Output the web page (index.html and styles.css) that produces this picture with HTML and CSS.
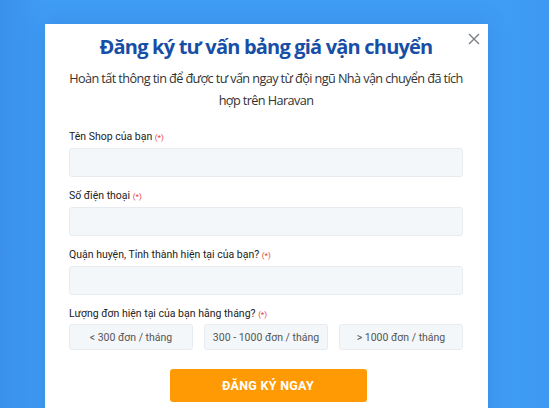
FILE: index.html
```html
<!DOCTYPE html>
<html lang="vi">
<head>
<meta charset="utf-8">
<title>Đăng ký tư vấn</title>
<link rel="stylesheet" href="styles.css">
</head>
<body>
<div class="stage">
  <div class="modal">
    <button class="close" aria-label="Đóng">
      <svg width="12" height="12" viewBox="0 0 12 12"><path d="M1 1L11 11M11 1L1 11" stroke="#7a7f86" stroke-width="1.4" fill="none"/></svg>
    </button>
    <h1 class="title">Đăng ký tư vấn bảng giá vận chuyển</h1>
    <p class="subtitle">Hoàn tất thông tin để được tư vấn ngay từ đội ngũ Nhà vận chuyển đã tích hợp trên Haravan</p>
    <form class="form">
      <div class="field">
        <label class="label">Tên Shop của bạn <span class="req">(*)</span></label>
        <div class="input"></div>
      </div>
      <div class="field">
        <label class="label">Số điện thoại <span class="req">(*)</span></label>
        <div class="input"></div>
      </div>
      <div class="field">
        <label class="label">Quận huyện, Tỉnh thành hiện tại của bạn? <span class="req">(*)</span></label>
        <div class="input"></div>
      </div>
      <div class="field last">
        <label class="label">Lượng đơn hiện tại của bạn hằng tháng? <span class="req">(*)</span></label>
        <div class="options">
          <div class="option">&lt; 300 đơn / tháng</div>
          <div class="option">300 - 1000 đơn / tháng</div>
          <div class="option">&gt; 1000 đơn / tháng</div>
        </div>
      </div>
      <div class="actions">
        <button type="button" class="submit">ĐĂNG KÝ NGAY</button>
      </div>
    </form>
  </div>
</div>
</body>
</html>
```
FILE: styles.css
```css
* { box-sizing: border-box; }
html, body { margin: 0; padding: 0; height: 100%; overflow: hidden; }
body {
  background: linear-gradient(90deg, #3a90ea 0%, #3f9df6 8%, #3f9df6 92%, #3d98f2 100%);
  font-family: Roboto, "Liberation Sans", Arial, sans-serif;
}
.stage {
  padding: 24px 0 0 45px;
}
.modal {
  position: relative;
  width: 443px;
  height: 400px;
  background: #fff;
  padding: 8px 25px 0 24px;
  box-shadow: 0 0 24px rgba(20, 60, 120, 0.18);
}
.close {
  position: absolute;
  top: 7px;
  right: 6px;
  width: 16px;
  height: 16px;
  padding: 2px;
  border: 0;
  background: transparent;
  display: flex;
  align-items: center;
  justify-content: center;
}
.title {
  margin: 0;
  text-align: center;
  font-family: "Open Sans", "Noto Sans", sans-serif;
  font-weight: 700;
  font-size: 20px;
  line-height: 30px;
  color: #174ea6;
  letter-spacing: -0.8px;
}
.subtitle {
  margin: 5px -5px 0;
  text-align: center;
  font-family: "Open Sans", "Noto Sans", sans-serif;
  font-size: 12.7px;
  line-height: 22px;
  color: #333;
  letter-spacing: -0.6px;
}
.form { margin-top: 19px; }
.field { margin-bottom: 12px; }
.label {
  display: block;
  font-size: 10.5px;
  line-height: 14px;
  color: #222;
  margin-bottom: 4px;
}
.req { color: #e53935; font-size: 8px; line-height: 0; }
.input {
  height: 29px;
  background: #f4f7fa;
  border: 1px solid #e8ecf0;
  border-radius: 3px;
}
.field.last { margin-bottom: 0; }
.field.last .label { margin-bottom: 3px; }
.options {
  display: grid;
  grid-template-columns: 1fr 1fr 1fr;
  gap: 11px;
}
.option {
  height: 26px;
  display: flex;
  align-items: center;
  justify-content: center;
  background: #f4f7fa;
  border: 1px solid #e8ecf0;
  border-radius: 3px;
  font-size: 10.5px;
  color: #555;
}
.actions {
  display: flex;
  justify-content: center;
  margin-top: 19px;
}
.submit {
  width: 197px;
  height: 33px;
  border: 0;
  border-radius: 3px;
  background: #ff9a05;
  color: #fff;
  font-family: Roboto, "Liberation Sans", Arial, sans-serif;
  font-weight: 700;
  font-size: 12.5px;
  letter-spacing: 0.3px;
  margin-left: 4px;
}
```
